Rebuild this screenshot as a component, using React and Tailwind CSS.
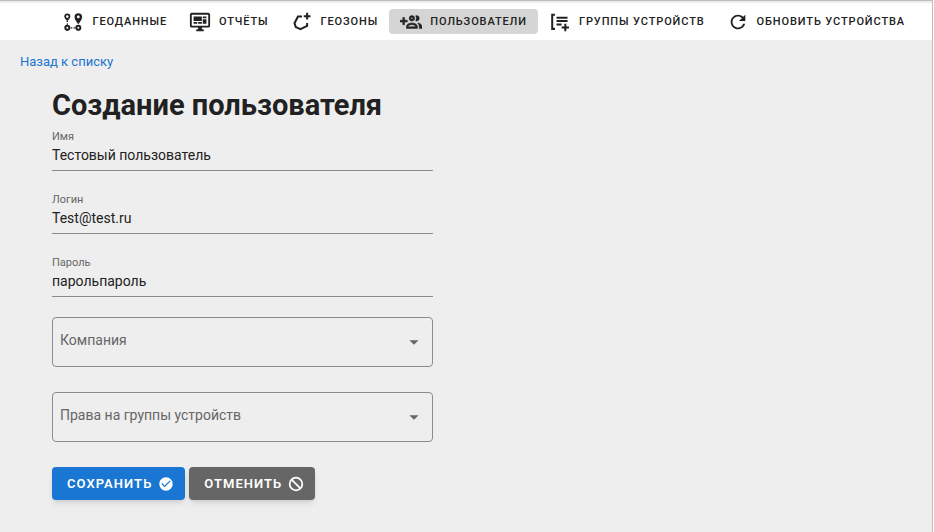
import React, { useState } from 'react';
import { MdRefresh, MdCheckCircle, MdArrowDropDown } from 'react-icons/md';

const GeodataIcon = () => (
  <svg viewBox="0 0 24 24" className="size-[22px] shrink-0" fill="none" stroke="currentColor" aria-hidden="true">
    <circle cx="5.8" cy="18.4" r="2.2" strokeWidth="2.2" />
    <circle cx="17.8" cy="18.4" r="2.2" strokeWidth="2.2" />
    <path d="M5.8 10.5v1.5M5.8 13.5v1.5M9.5 18.4h1.8M12.6 18.4h1.8" strokeWidth="1.6" />
    <path
      d="M5.8 2.8a3.3 3.3 0 0 0-3.3 3.3c0 2 3.3 5 3.3 5s3.3-3 3.3-5a3.3 3.3 0 0 0-3.3-3.3zm0 1.9a1.4 1.4 0 1 1 0 2.8 1.4 1.4 0 0 1 0-2.8z"
      fill="currentColor"
      stroke="none"
    />
    <path
      d="M17.8 2.5a4.1 4.1 0 0 0-4.1 4.1c0 3.2 4.1 8 4.1 8s4.1-4.8 4.1-8a4.1 4.1 0 0 0-4.1-4.1zm0 2.5a1.5 1.5 0 1 1 0 3 1.5 1.5 0 0 1 0-3z"
      fill="currentColor"
      stroke="none"
    />
  </svg>
);

const ReportsIcon = () => (
  <svg viewBox="0 0 24 24" className="size-[22px] shrink-0" fill="currentColor" aria-hidden="true">
    <path d="M21 16V4H3v12h18m0-14a2 2 0 0 1 2 2v12a2 2 0 0 1-2 2h-7v2h2v2H8v-2h2v-2H3a2 2 0 0 1-2-2V4a2 2 0 0 1 2-2h18M5 6h9v5H5V6m10 0h4v2h-4V6m4 3v5h-4V9h4M5 12h4v2H5v-2m5 0h4v2h-4v-2z" />
  </svg>
);

const ZonesIcon = () => (
  <svg viewBox="0 0 24 24" className="size-[22px] shrink-0" fill="none" stroke="currentColor" strokeWidth="2.2" aria-hidden="true">
    <path d="M12 6H7.6L3.8 13.3L5.2 17.5L10.3 19.9L17.6 16.3V13" />
    <path d="M17.6 2v7.4M13.9 5.7h7.4" />
  </svg>
);

const UsersIcon = () => (
  <svg viewBox="0 0 24 24" className="size-[22px] shrink-0" fill="currentColor" stroke="currentColor" strokeWidth="0.5" aria-hidden="true">
    <path d="M13 11A3 3 0 1 0 10 8A3 3 0 0 0 13 11M13 7A1 1 0 1 1 12 8A1 1 0 0 1 13 7M17.11 10.86A5 5 0 0 0 17.11 5.14A2.91 2.91 0 0 1 18 5A3 3 0 0 1 18 11A2.91 2.91 0 0 1 17.11 10.86M13 13C7 13 7 17 7 17V19H19V17S19 13 13 13M9 17C9 16.71 9.32 15 13 15C16.5 15 16.94 16.56 17 17M24 17V19H21V17A5.6 5.6 0 0 0 19.2 13.06C24 13.55 24 17 24 17M8 12H5V15H3V12H0V10H3V7H5V10H8Z" />
  </svg>
);

const GroupsIcon = () => (
  <svg viewBox="0 0 24 24" className="size-[22px] shrink-0" fill="none" stroke="currentColor" strokeWidth="2.2" aria-hidden="true">
    <path d="M6.5 4H3.5v15.5h3M8.2 7.4h12M8.2 11h12M8.2 14.6h5.5M17.8 14v8M13.8 18h8" />
  </svg>
);

const CancelIcon = () => (
  <svg viewBox="0 0 24 24" className="size-4 shrink-0" fill="none" stroke="currentColor" strokeWidth="2.6" aria-hidden="true">
    <circle cx="12" cy="12" r="9.5" />
    <path d="M5.3 5.3l13.4 13.4" />
  </svg>
);

const navItems = [
  { id: 'geodata', title: 'Геоданные', Icon: GeodataIcon },
  { id: 'reports', title: 'Отчёты', Icon: ReportsIcon },
  { id: 'zones', title: 'Геозоны', Icon: ZonesIcon },
  { id: 'users', title: 'Пользователи', Icon: UsersIcon },
  { id: 'groups', title: 'Группы устройств', Icon: GroupsIcon },
  { id: 'refresh', title: 'Обновить устройства', Icon: () => <MdRefresh className="size-[22px] shrink-0" /> },
];

const TextField = ({ id, label, value, onChange }) => (
  <div className="mb-5 flex flex-col border-b border-[#8c8c8c] pb-1.5">
    <label htmlFor={id} className="text-[11px] leading-[18px] text-[#666]">
      {label}
    </label>
    <input
      id={id}
      type="text"
      value={value}
      onChange={(e) => onChange(e.target.value)}
      className="h-[18px] w-full bg-transparent text-sm text-[#222] outline-none"
    />
  </div>
);

const SelectField = ({ id, label }) => (
  <div className="relative mb-[25px]">
    <select
      id={id}
      defaultValue=""
      className="block h-[50px] w-full appearance-none rounded border border-[#8c8c8c] bg-transparent px-2 text-sm outline-none"
    >
      <option value="" />
    </select>
    <label htmlFor={id} className="pointer-events-none absolute inset-y-0 left-2 flex items-center pb-1 text-sm text-[#666]">
      {label}
    </label>
    <MdArrowDropDown className="pointer-events-none absolute inset-y-0 right-2 my-auto size-[22px] text-[#666]" />
  </div>
);

const App = () => {
  const [active, setActive] = useState('users');
  const [user, setUser] = useState({
    name: 'Тестовый пользователь',
    login: 'Test@test.ru',
    password: 'парольпароль',
  });

  const update = (key) => (value) => setUser((prev) => ({ ...prev, [key]: value }));

  return (
    <div className="mr-px min-h-screen border-t border-r border-[#bdbdbd] bg-[#eee] font-[Roboto,sans-serif] text-[#212121]">
      <nav className="flex justify-end border-t-2 border-[#eee] bg-white py-1.5 pr-4">
        {navItems.map(({ id, title, Icon }) => (
          <button
            key={id}
            type="button"
            onClick={() => setActive(id)}
            className={`flex h-[25px] items-center gap-2 rounded px-[11px] text-[11px] leading-[17px] font-medium tracking-[0.08em] whitespace-nowrap uppercase ${
              active === id ? 'bg-[#d5d5d5]' : ''
            }`}
          >
            <Icon />
            {title}
          </button>
        ))}
      </nav>

      <main className="px-5 pt-3">
        <a href="#users" className="block text-[13px] leading-5 text-[#1976d2]">
          Назад к списку
        </a>

        <form className="mt-4 ml-8 max-w-[381px]" onSubmit={(e) => e.preventDefault()}>
          <h1 className="mb-1.5 text-[29px] leading-[34px] font-bold whitespace-nowrap">Создание пользователя</h1>
          <TextField id="name" label="Имя" value={user.name} onChange={update('name')} />
          <TextField id="login" label="Логин" value={user.login} onChange={update('login')} />
          <TextField id="password" label="Пароль" value={user.password} onChange={update('password')} />
          <SelectField id="company" label="Компания" />
          <SelectField id="rights" label="Права на группы устройств" />

          <div className="flex gap-1">
            <button
              type="submit"
              className="flex h-[33px] items-center gap-1.5 rounded bg-[#1976d2] pr-[11px] pl-[15px] text-[13px] font-semibold tracking-[0.08em] text-white uppercase shadow-md"
            >
              Сохранить
              <MdCheckCircle className="size-4 shrink-0" />
            </button>
            <button
              type="button"
              className="flex h-[33px] items-center gap-1.5 rounded bg-[#666] pr-[11px] pl-[15px] text-[13px] font-semibold tracking-[0.08em] text-white uppercase shadow-md"
            >
              Отменить
              <CancelIcon />
            </button>
          </div>
        </form>
      </main>
    </div>
  );
};

export default App;
